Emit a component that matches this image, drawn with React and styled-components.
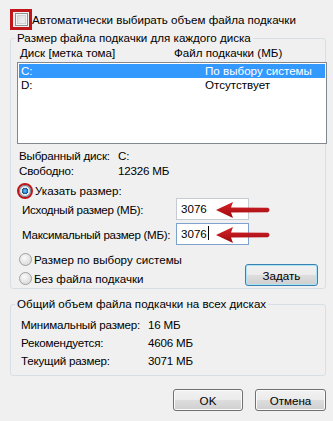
import React from 'react';
import styled, { createGlobalStyle, css } from 'styled-components';

const GlobalStyle = createGlobalStyle`
  html, body {
    margin: 0;
    background: #f0f0f0;
  }
  body {
    font-family: "Liberation Sans", Arial, sans-serif;
    font-size: 11.6px;
    color: #000;
    white-space: nowrap;
  }
`;

const Dialog = styled.div`
  width: 333px;
  height: 421px;
  box-sizing: border-box;
  padding: 9px 7px 0 10px;
  background: #f0f0f0;
`;

const CheckRow = styled.label`
  display: flex;
  align-items: center;
  height: 21px;
`;

const Mark = styled.span`
  display: flex;
  align-items: center;
  justify-content: center;
  width: 22px;
  height: 21px;
  box-sizing: border-box;
  border: 3px solid #c0161a;
`;

const CheckBox = styled.span`
  width: 13px;
  height: 13px;
  box-sizing: border-box;
  border: 1px solid #8e8f8f;
  background: linear-gradient(135deg, #d6d6d6 0%, #f6f6f6 100%);
  box-shadow: inset 0 0 0 1px #f4f4f4, inset 0 0 0 2px #d0d0d0;
`;

const Group = styled.fieldset`
  margin: ${({ $top }) => $top}px 0 0;
  padding: 0 0 ${({ $bottom }) => $bottom}px 6px;
  border: 1px solid #d5dfe5;
  border-radius: 3px;
  min-width: 0;
`;

const Legend = styled.legend`
  margin-left: -2px;
  padding: 0 2px;
  line-height: 14px;
`;

const Headers = styled.div`
  display: grid;
  grid-template-columns: 154px 1fr;
  margin-top: 1px;
  padding-left: 3px;
  line-height: 14px;
`;

const ListBox = styled.div`
  margin: 2px -2px 0 0;
  height: 82px;
  box-sizing: border-box;
  padding: 1px;
  border: 1px solid #828790;
  background: #fff;
`;

const ListRow = styled.div`
  display: grid;
  grid-template-columns: 184px 1fr;
  height: 14px;
  line-height: 14px;
  padding-left: 2px;
  ${({ $selected }) =>
    $selected &&
    css`
      background: #3399ff;
      color: #fff;
    `}
`;

const InfoGrid = styled.div`
  display: grid;
  grid-template-columns: ${({ $label }) => $label}px 1fr;
  grid-auto-rows: ${({ $row }) => $row}px;
  align-items: center;
  margin-top: ${({ $top }) => $top}px;
  padding-left: ${({ $indent }) => $indent}px;
  letter-spacing: -0.2px;
`;

const RadioRow = styled.label`
  display: flex;
  align-items: center;
  gap: 2px;
  height: ${({ $h }) => $h || 16}px;
  margin-top: ${({ $top }) => $top || 0}px;
`;

const Ring = styled.span`
  display: flex;
  align-items: center;
  justify-content: center;
  width: 16px;
  height: 16px;
  box-sizing: border-box;
  border: 2px solid #c0161a;
  border-radius: 50%;
`;

const Radio = styled.span`
  width: ${({ $size }) => $size || 13}px;
  height: ${({ $size }) => $size || 13}px;
  box-sizing: border-box;
  border-radius: 50%;
  border: 1px solid #a0a0a0;
  background: radial-gradient(circle at 40% 35%, #fbfbfb 0%, #e2e2e2 60%, #cfcfcf 100%);
  ${({ $checked }) =>
    $checked &&
    css`
      border-color: #6b7a8c;
      background: radial-gradient(circle at 50% 50%, #7cc4f5 0%, #2a7fc4 30%, #184a72 42%, #e6ebf0 50%, #d0d6dc 100%);
    `}
`;

const SizeRows = styled.div`
  display: grid;
  grid-template-columns: 154px 73px;
  grid-auto-rows: 22px;
  row-gap: 3px;
  align-items: center;
  padding-left: 5px;
`;

const SizeLabel = styled.span`
  letter-spacing: -0.3px;
`;

const InputBox = styled.div`
  position: relative;
  height: 22px;
  box-sizing: border-box;
  border: 1px solid ${({ $focused }) => ($focused ? '#7da2ce' : '#c5cbd3')};
  background: #fff;
  padding-left: 4px;
  line-height: 20px;
`;

const Caret = styled.span`
  display: inline-block;
  width: 1px;
  height: 14px;
  margin-left: 1px;
  vertical-align: -2px;
  background: #000;
`;

const Arrow = styled.svg`
  position: absolute;
  left: 39px;
  top: 2px;
`;

const Bottom = styled.div`
  display: flex;
  justify-content: space-between;
  align-items: flex-end;
  margin-top: 6px;
  padding: 0 7px 0 2px;
`;

const RadioCol = styled.div`
  display: flex;
  flex-direction: column;
  gap: 3px;
  align-self: flex-start;
`;

const Button = styled.button`
  width: ${({ $w }) => $w}px;
  height: 22px;
  padding: 0;
  font: inherit;
  color: #000;
  border-radius: 3px;
  border: 1px solid ${({ $default }) => ($default ? '#3c7fb1' : '#707070')};
  background: linear-gradient(#f2f2f2 0%, #ebebeb 48%, #dddddd 52%, #cfcfcf 100%);
  box-shadow: inset 0 0 0 1px ${({ $default }) => ($default ? '#a9e4f7' : '#fbfbfb')};
`;

const Footer = styled.div`
  display: flex;
  justify-content: flex-end;
  gap: 12px;
  margin-top: 13px;
`;

const RedArrow = () => (
  <Arrow width="56" height="18" viewBox="0 0 56 18">
    <defs>
      <linearGradient id="ag" x1="0" y1="0" x2="0" y2="1">
        <stop offset="0" stopColor="#d8232a" />
        <stop offset="1" stopColor="#9c0a0e" />
      </linearGradient>
    </defs>
    <path d="M0 9 L17 1 L15 6.5 L52 6.8 Q55 9 52 11.2 L15 11.5 L17 17 Z" fill="url(#ag)" />
  </Arrow>
);

export default function App() {
  return (
    <Dialog>
      <GlobalStyle />
      <CheckRow>
        <Mark>
          <CheckBox />
        </Mark>
        Автоматически выбирать объем файла подкачки
      </CheckRow>

      <Group $top={1} $bottom={2}>
        <Legend>Размер файла подкачки для каждого диска</Legend>
        <Headers>
          <span>Диск [метка тома]</span>
          <span>Файл подкачки (МБ)</span>
        </Headers>
        <ListBox>
          <ListRow $selected>
            <span>C:</span>
            <span>По выбору системы</span>
          </ListRow>
          <ListRow>
            <span>D:</span>
            <span>Отсутствует</span>
          </ListRow>
        </ListBox>

        <InfoGrid $label={99} $row={15} $top={4} $indent={2}>
          <span>Выбранный диск:</span>
          <span>C:</span>
          <span>Свободно:</span>
          <span>12326 МБ</span>
        </InfoGrid>

        <RadioRow $top={5} $h={15}>
          <Ring>
            <Radio $checked $size={12} />
          </Ring>
          Указать размер:
        </RadioRow>

        <SizeRows>
          <SizeLabel>Исходный размер (МБ):</SizeLabel>
          <InputBox>
            3076
            <RedArrow />
          </InputBox>
          <SizeLabel>Максимальный размер (МБ):</SizeLabel>
          <InputBox $focused>
            3076
            <Caret />
            <RedArrow />
          </InputBox>
        </SizeRows>

        <Bottom>
          <RadioCol>
            <RadioRow>
              <Radio />
              Размер по выбору системы
            </RadioRow>
            <RadioRow>
              <Radio />
              Без файла подкачки
            </RadioRow>
          </RadioCol>
          <Button $w={73} $default>
            Задать
          </Button>
        </Bottom>
      </Group>

      <Group $top={8} $bottom={6}>
        <Legend>Общий объем файла подкачки на всех дисках</Legend>
        <InfoGrid $label={127} $row={18} $top={4} $indent={4}>
          <span>Минимальный размер:</span>
          <span>16 МБ</span>
          <span>Рекомендуется:</span>
          <span>4606 МБ</span>
          <span>Текущий размер:</span>
          <span>3071 МБ</span>
        </InfoGrid>
      </Group>

      <Footer>
        <Button $w={70}>OK</Button>
        <Button $w={71}>Отмена</Button>
      </Footer>
    </Dialog>
  );
}
